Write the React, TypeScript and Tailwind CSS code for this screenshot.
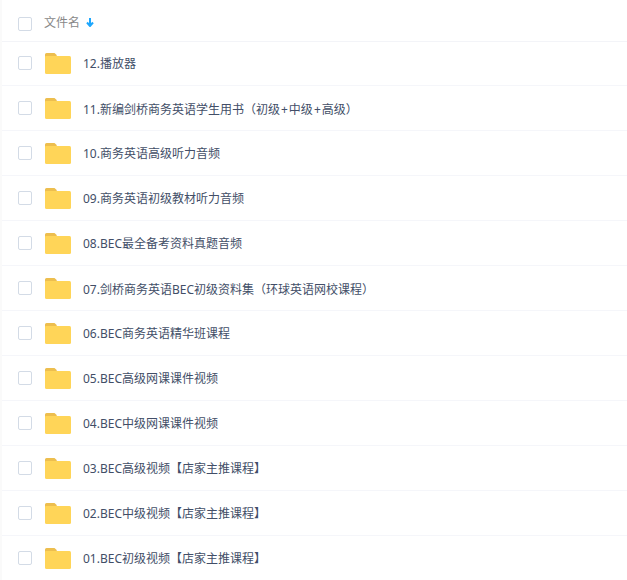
const files = [
  "12.播放器",
  "11.新编剑桥商务英语学生用书（初级+中级+高级）",
  "10.商务英语高级听力音频",
  "09.商务英语初级教材听力音频",
  "08.BEC最全备考资料真题音频",
  "07.剑桥商务英语BEC初级资料集（环球英语网校课程）",
  "06.BEC商务英语精华班课程",
  "05.BEC高级网课课件视频",
  "04.BEC中级网课课件视频",
  "03.BEC高级视频【店家主推课程】",
  "02.BEC中级视频【店家主推课程】",
  "01.BEC初级视频【店家主推课程】",
];

function FolderIcon() {
  return (
    <svg width="26" height="21" viewBox="0 0 26 21" className="ml-[13px] shrink-0">
      <path d="M0 1.500A1.500 1.500 0 0 1 1.500 0H9.500L11.700 2V6H0z" fill="#EDBE4E" />
      <path d="M0 4A1 1 0 0 1 1 3H24.500A1.500 1.500 0 0 1 26 4.500V19.500A1.500 1.500 0 0 1 24.500 21H1.500A1.500 1.500 0 0 1 0 19.500z" fill="#FFD558" />
    </svg>
  );
}

function Checkbox() {
  return <span className="block h-[14px] w-[14px] shrink-0 rounded-[2px] border border-[#d3dbe6] bg-white" />;
}

// parens sit centred in their cell in the reference (the TC glyph), and + is a bit wider
function FileName({ name }: { name: string }) {
  return (
    <span className="ml-[12px] mt-[2px] text-[#424e67]">
      {name.split(/([（）+])/).map((part, i) => {
        if (part === "（" || part === "）") {
          return <span key={i} className="font-['Noto_Sans_CJK_TC',sans-serif]">{part}</span>;
        }
        if (part === "+") {
          return <span key={i} className="px-[1px]">{part}</span>;
        }
        return part;
      })}
    </span>
  );
}

export default function App() {
  return (
    <div className="h-[580px] w-[627px] overflow-hidden bg-[#fafafa] pl-[2px]">
      <div className="h-full bg-white font-['Noto_Sans','Noto_Sans_CJK_SC',sans-serif] text-xs [text-spacing-trim:space-all]">
        <div className="flex h-[42px] items-center border-b border-[#f3f4f8] pl-[16px] pt-[7px]">
          <Checkbox />
          <span className="ml-[12px] mb-[2px] text-[#888888]">文件名</span>
          <svg width="8" height="9" viewBox="0 0 8 9" className="ml-[6px] mb-[3px]">
            <path d="M4 0V8M1 4.500 4 8 7 4.500" fill="none" stroke="#1ea7fd" strokeWidth="2" />
          </svg>
        </div>
        <div>
          {files.map((name) => (
            <div key={name} className="flex h-[45px] items-center border-b border-[#f5f6fa] pl-[16px] first:h-[44px] first:pb-[1px] last:border-b-transparent">
              <Checkbox />
              <FolderIcon />
              <FileName name={name} />
            </div>
          ))}
        </div>
      </div>
    </div>
  );
}
